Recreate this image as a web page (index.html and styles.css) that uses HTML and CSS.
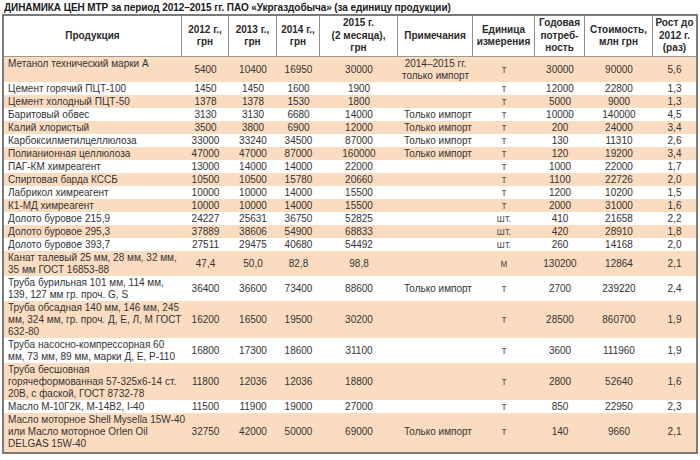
FILE: index.html
```html
<!DOCTYPE html>
<html lang="ru">
<head>
<meta charset="utf-8">
<title>Динамика цен МТР</title>
<link rel="stylesheet" href="styles.css">
</head>
<body>
<div class="page">
  <h1 class="title">ДИНАМИКА ЦЕН МТР за период 2012–2015 гг. ПАО «Укргаздобыча» (за единицу продукции)</h1>
  <table class="prices">
    <colgroup>
      <col class="c-name"><col class="c-y12"><col class="c-y13"><col class="c-y14"><col class="c-y15"><col class="c-note"><col class="c-unit"><col class="c-need"><col class="c-cost"><col class="c-grow">
    </colgroup>
    <thead>
      <tr>
        <th>Продукция</th>
        <th>2012 г.,<br>грн</th>
        <th>2013 г.,<br>грн</th>
        <th>2014 г.,<br>грн</th>
        <th>2015 г.<br>(2 месяца),<br>грн</th>
        <th>Примечания</th>
        <th>Единица<br>измерения</th>
        <th>Годовая<br>потреб-<br>ность</th>
        <th>Стоимость,<br>млн грн</th>
        <th class="last">Рост до<br>2012 г.<br>(раз)</th>
      </tr>
    </thead>
    <tbody>
      <tr class="odd"><td>Метанол технический марки А</td><td>5400</td><td>10400</td><td>16950</td><td>30000</td><td>2014–2015 гг.<br>только импорт</td><td class="u">т</td><td>30000</td><td>90000</td><td>5,6</td></tr>
      <tr><td>Цемент горячий ПЦТ-100</td><td>1450</td><td>1450</td><td>1600</td><td>1900</td><td></td><td class="u">т</td><td>12000</td><td>22800</td><td>1,3</td></tr>
      <tr class="odd"><td>Цемент холодный ПЦТ-50</td><td>1378</td><td>1378</td><td>1530</td><td>1800</td><td></td><td class="u">т</td><td>5000</td><td>9000</td><td>1,3</td></tr>
      <tr><td>Баритовый обвес</td><td>3130</td><td>3130</td><td>6680</td><td>14000</td><td class="n">Только импорт</td><td class="u">т</td><td>10000</td><td>140000</td><td>4,5</td></tr>
      <tr class="odd"><td>Калий хлористый</td><td>3500</td><td>3800</td><td>6900</td><td>12000</td><td class="n">Только импорт</td><td class="u">т</td><td>200</td><td>24000</td><td>3,4</td></tr>
      <tr><td>Карбоксилметилцеллюлоза</td><td>33000</td><td>33240</td><td>34500</td><td>87000</td><td class="n">Только импорт</td><td class="u">т</td><td>130</td><td>11310</td><td>2,6</td></tr>
      <tr class="odd"><td>Полианионная целлюлоза</td><td>47000</td><td>47000</td><td>87000</td><td>160000</td><td class="n">Только импорт</td><td class="u">т</td><td>120</td><td>19200</td><td>3,4</td></tr>
      <tr><td>ПАГ-КМ химреагент</td><td>13000</td><td>14000</td><td>14000</td><td>22000</td><td></td><td class="u">т</td><td>1000</td><td>22000</td><td>1,7</td></tr>
      <tr class="odd"><td>Спиртовая барда КССБ</td><td>10500</td><td>10500</td><td>15780</td><td>20660</td><td></td><td class="u">т</td><td>1100</td><td>22726</td><td>2,0</td></tr>
      <tr><td>Лабрикол химреагент</td><td>10000</td><td>10000</td><td>14000</td><td>15500</td><td></td><td class="u">т</td><td>1200</td><td>10200</td><td>1,5</td></tr>
      <tr class="odd"><td>К1-МД химреагент</td><td>10000</td><td>10000</td><td>14000</td><td>15500</td><td></td><td class="u">т</td><td>2000</td><td>31000</td><td>1,6</td></tr>
      <tr><td>Долото буровое 215,9</td><td>24227</td><td>25631</td><td>36750</td><td>52825</td><td></td><td class="u">шт.</td><td>410</td><td>21658</td><td>2,2</td></tr>
      <tr class="odd"><td>Долото буровое 295,3</td><td>37889</td><td>38606</td><td>54900</td><td>68833</td><td></td><td class="u">шт.</td><td>420</td><td>28910</td><td>1,8</td></tr>
      <tr><td>Долото буровое 393,7</td><td>27511</td><td>29475</td><td>40680</td><td>54492</td><td></td><td class="u">шт.</td><td>260</td><td>14168</td><td>2,0</td></tr>
      <tr class="odd"><td>Канат талевый 25 мм, 28 мм, 32 мм,<br>35 мм ГОСТ 16853-88</td><td>47,4</td><td>50,0</td><td>82,8</td><td>98,8</td><td></td><td class="u">м</td><td>130200</td><td>12864</td><td>2,1</td></tr>
      <tr><td>Труба бурильная 101 мм, 114 мм,<br>139, 127 мм гр. проч. G, S</td><td>36400</td><td>36600</td><td>73400</td><td>88600</td><td class="n">Только импорт</td><td class="u">т</td><td>2700</td><td>239220</td><td>2,4</td></tr>
      <tr class="odd"><td>Труба обсадная 140 мм, 146 мм, 245<br>мм, 324 мм, гр. проч. Д, Е, Л, М ГОСТ<br>632-80</td><td>16200</td><td>16500</td><td>19500</td><td>30200</td><td></td><td class="u">т</td><td>28500</td><td>860700</td><td>1,9</td></tr>
      <tr><td>Труба насосно-компрессорная 60<br>мм, 73 мм, 89 мм, марки Д, Е, Р-110</td><td>16800</td><td>17300</td><td>18600</td><td>31100</td><td></td><td class="u">т</td><td>3600</td><td>111960</td><td>1,9</td></tr>
      <tr class="odd"><td>Труба бесшовная<br>горячеформованная 57-325х6-14 ст.<br>20В, с фаской, ГОСТ 8732-78</td><td>11800</td><td>12036</td><td>12036</td><td>18800</td><td></td><td class="u">т</td><td>2800</td><td>52640</td><td>1,6</td></tr>
      <tr><td>Масло М-10Г2К, М-14В2, І-40</td><td>11500</td><td>11900</td><td>19000</td><td>27000</td><td></td><td class="u">т</td><td>850</td><td>22950</td><td>2,3</td></tr>
      <tr class="odd"><td>Масло моторное Shell Mysella 15W-40<br>или Масло моторное Orlen Oil<br>DELGAS 15W-40</td><td>32750</td><td>42000</td><td>50000</td><td>69000</td><td class="n">Только импорт</td><td class="u">т</td><td>140</td><td>9660</td><td>2,1</td></tr>
    </tbody>
  </table>
</div>
</body>
</html>
```

FILE: styles.css
```css
html, body {
  margin: 0;
  padding: 0;
  background: #ffffff;
}

.page {
  width: 700px;
  font-family: "Liberation Sans", Arial, sans-serif;
  color: #333333;
}

.title {
  margin: 0;
  padding: 2px 0 0 4px;
  height: 12px;
  font-size: 10px;
  line-height: 12px;
  font-weight: bold;
  letter-spacing: -0.08px;
  color: #1a1a1a;
}

.prices {
  margin-left: 2px;
  width: 696px;
  table-layout: fixed;
  border-collapse: separate;
  border-spacing: 0;
  border: 2px solid #7a7a7a;
  font-size: 10px;
}

.c-name { width: 178px; }
.c-y12 { width: 47px; }
.c-y13 { width: 48px; }
.c-y14 { width: 43px; }
.c-y15 { width: 78px; }
.c-note { width: 75px; }
.c-unit { width: 62px; }
.c-need { width: 50px; }
.c-cost { width: 68px; }
.c-grow { width: 43px; }

.prices th {
  padding: 1px 2px 1px;
  height: 38px;
  font-weight: bold;
  line-height: 12.5px;
  color: #2a2a2a;
  text-align: center;
  vertical-align: middle;
  border-right: 1px solid #8c8c8c;
  border-bottom: 1px solid #9a9a9a;
}

.prices th.last {
  border-right: none;
}

.prices td {
  padding: 1px 2px 0;
  line-height: 12px;
  text-align: center;
  vertical-align: middle;
  white-space: nowrap;
}

.prices td:first-child {
  text-align: left;
  vertical-align: top;
  padding-left: 4px;
}

.prices tr.odd td {
  background: #fcdcc0;
}

.prices tbody tr:last-child td {
  padding-bottom: 2px;
}

.prices td.n {
  text-align: left;
  padding-left: 6px;
}

.prices td.u {
  color: #555555;
}
```
